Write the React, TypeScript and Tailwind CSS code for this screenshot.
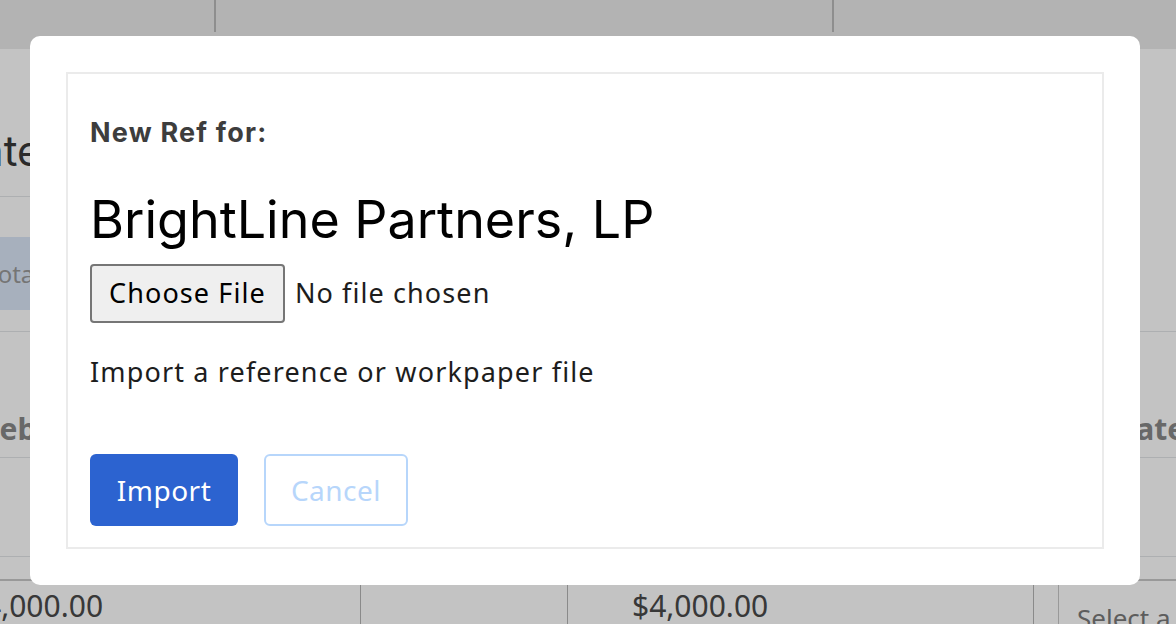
import React from "react";

const HEAD = "font-['Inter','Lato',sans-serif]";
const BODY = "font-['Noto_Sans','Roboto',sans-serif]";

function Background() {
  return (
    <div className={`min-h-[624px] bg-white ${BODY}`}>
      <div className="flex h-[49px] bg-[#ebebeb]">
        <div className="h-[32px] w-[216px] border-r-2 border-[#bababa]" />
        <div className="h-[32px] w-[618px] border-r-2 border-[#bababa]" />
      </div>
      <div className="h-[148px] w-[600px]">
        <div className="-ml-[128px] flex h-full items-end border-b border-[#e3e5e8] pb-[20px]">
          <h1 className={`${HEAD} text-[42px] leading-[50px] text-[#373737]`}>Estimate</h1>
        </div>
      </div>
      <div className="pt-[40px]">
        <div className="-ml-[54px] flex h-[73px] w-[200px] items-center bg-[#dbe7f8] pl-[40px] text-[24px] text-[#9a9a9a]">
          Total
        </div>
      </div>
      <div className="mt-[21px] border-b border-[#e3e5e8]" />
      <div className="flex h-[126px] items-end border-b border-[#e3e5e8] pb-[6px] text-[30px] font-bold text-[#888]">
        <span className="-ml-[17px] w-[1134px] shrink-0">Feb</span>
        <span className="shrink-0">Category</span>
      </div>
      <div className="h-[99px] border-b border-[#e3e5e8]" />
      <div className="h-[22px]" />
      <div className="flex h-[46px] border-t-2 border-[#c8c8c8] text-[30px] text-[#4a4a4a]">
        <div className="flex w-[361px] items-center border-r border-[#b5b5b5]">
          <span className="-ml-[16px] pt-[4px]">4,000.00</span>
        </div>
        <div className="w-[207px] border-r border-[#b5b5b5]" />
        <div className="flex w-[466px] items-center border-r border-[#b5b5b5] pl-[64px] pt-[4px]">$4,000.00</div>
        <div className="w-[24px]" />
        <div className="flex-1 border-l border-[#c8c8c8] pl-[18px] pt-[18px] text-[26px] text-[#7a7a7a]">Select a</div>
      </div>
    </div>
  );
}

export default function App() {
  return (
    <div className="relative h-[624px] w-[1176px] overflow-hidden">
      <Background />
      <div className="fixed inset-0 bg-[rgba(0,0,0,0.235)] pl-[30px] pt-[36px]">
        <div className="w-[1110px] rounded-[10px] bg-white p-[36px]">
          <div className="h-[477px] border-2 border-[#ebebeb] px-[22px] pt-[44px]">
            <div className={`${HEAD} text-[27px] leading-[30px] font-bold tracking-[1.2px] text-[#3d3d3d]`}>New Ref for:</div>
            <h2 className={`${HEAD} mt-[45px] text-[52px] leading-[54px] text-black`}>BrightLine Partners, LP</h2>
            <div className={`${BODY} mt-[17px] flex items-center gap-[10px] text-[27px] tracking-[1.1px] text-[#1d1d1d]`}>
              <button className="h-[59px] rounded-[4px] border-2 border-[#767676] bg-[#efefef] px-[17px] text-black">
                Choose File
              </button>
              <span>No file chosen</span>
            </div>
            <p className={`${BODY} mt-[32px] text-[27px] leading-[34px] tracking-[1.15px] text-[#1d1d1d]`}>
              Import a reference or workpaper file
            </p>
            <div className={`${BODY} mt-[65px] flex gap-[26px] text-[28px] tracking-[0.5px]`}>
              <button className="h-[72px] w-[148px] rounded-[6px] bg-[#2c63d0] text-white">Import</button>
              <button className="h-[72px] w-[144px] rounded-[6px] border-2 border-[#b7d6fb] text-[#b7d6fb]">
                Cancel
              </button>
            </div>
          </div>
        </div>
      </div>
    </div>
  );
}
